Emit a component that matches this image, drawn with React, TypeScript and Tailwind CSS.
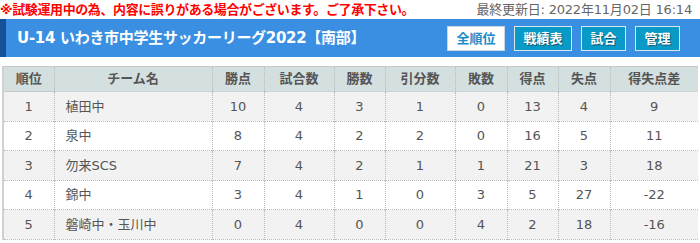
import React from "react";

const COLS = [
  { label: "順位", w: "w-[51px]" },
  { label: "チーム名", w: "w-[158px]" },
  { label: "勝点", w: "w-[52px]" },
  { label: "試合数", w: "w-[70px]" },
  { label: "勝数", w: "w-[51px]" },
  { label: "引分数", w: "w-[70px]" },
  { label: "敗数", w: "w-[52px]" },
  { label: "得点", w: "w-[51px]" },
  { label: "失点", w: "w-[52px]" },
  { label: "得失点差", w: "" },
];

const ROWS: (string | number)[][] = [
  [1, "植田中", 10, 4, 3, 1, 0, 13, 4, 9],
  [2, "泉中", 8, 4, 2, 2, 0, 16, 5, 11],
  [3, "勿来SCS", 7, 4, 2, 1, 1, 21, 3, 18],
  [4, "錦中", 3, 4, 1, 0, 3, 5, 27, -22],
  [5, "磐崎中・玉川中", 0, 4, 0, 0, 4, 2, 18, -16],
];

const NAV = [
  { label: "全順位", w: "w-[58px]" },
  { label: "戦績表", w: "w-[58px]" },
  { label: "試合", w: "w-[45px]" },
  { label: "管理", w: "w-[45px]" },
];

export default function App() {
  return (
    <div className="w-[700px] h-[243px] bg-white overflow-hidden font-['DejaVu_Sans','Noto_Sans_CJK_JP',sans-serif]">
      {/* お知らせ + 更新日 */}
      <div className="flex items-center justify-between h-[19px] pr-2 text-[13px] leading-none">
        <span className="text-[#f00] font-bold tracking-[-0.4px]">
          ※試験運用中の為、内容に誤りがある場合がございます。ご了承下さい。
        </span>
        <span className="text-[#666] tracking-[-0.2px]">最終更新日: 2022年11月02日 16:14</span>
      </div>

      {/* タイトルバー */}
      <div className="flex items-center justify-between h-[38px] bg-[#3a8fe3] border-l-[6px] border-[#16529a] pl-[11px] pr-[20px]">
        <h1 className="text-white font-bold text-[15px] tracking-[-0.3px]">
          U-14 いわき市中学生サッカーリーグ2022【南部】
        </h1>
        <div className="flex gap-[9px]">
          {NAV.map((n, i) => (
            <button
              key={n.label}
              className={`${n.w} h-[25px] border text-[13px] font-bold leading-none ${
                i === 0
                  ? "bg-white text-[#1a8cc8] border-[#cfd8e0]"
                  : "bg-[#0a9ac8] text-white border-[#dde6ee] [text-shadow:1px_1px_1px_rgba(0,0,0,0.45)]"
              }`}
            >
              {n.label}
            </button>
          ))}
        </div>
      </div>

      {/* 順位表 */}
      <div className="px-[2px] pt-[9px]">
        <table className="w-[696px] border-collapse table-fixed text-[13px] text-[#555] border-l-2 border-[#d0d0d0]">
          <thead>
            <tr className="bg-[#d4dfe0] h-[25px] border-t border-[#c8c8c8]">
              {COLS.map((c, i) => (
                <th
                  key={c.label}
                  className={`${c.w} font-bold text-[#555] border-b border-[#c8c8c8] ${
                    i > 0 ? "border-l border-dotted border-l-[#bbb]" : ""
                  }`}
                >
                  {c.label}
                </th>
              ))}
            </tr>
          </thead>
          <tbody>
            {ROWS.map((r, ri) => (
              <tr
                key={ri}
                className={`h-[29.5px] border-b border-dotted border-[#bbb] ${
                  ri % 2 === 0 ? "bg-[#f2f2f2]" : "bg-white"
                }`}
              >
                {r.map((v, ci) => (
                  <td
                    key={ci}
                    className={`${ci === 1 ? "text-left pl-[11px]" : "text-center"} ${
                      ci > 0 ? "border-l border-dotted border-[#bbb]" : ""
                    }`}
                  >
                    {v}
                  </td>
                ))}
              </tr>
            ))}
          </tbody>
        </table>
      </div>
    </div>
  );
}
